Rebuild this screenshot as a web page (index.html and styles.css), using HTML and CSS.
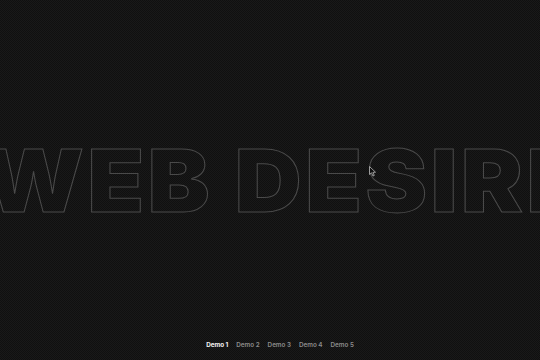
FILE: index.html
```html
<!DOCTYPE html>
<html lang="en">
<head>
<meta charset="utf-8">
<title>Web Desire</title>
<link rel="stylesheet" href="styles.css">
</head>
<body>
<main class="stage">
  <h1 class="title">WEB DESIRE</h1>
  <nav class="demos">
    <a class="demo current" href="#">Demo 1</a>
    <a class="demo" href="#">Demo 2</a>
    <a class="demo" href="#">Demo 3</a>
    <a class="demo" href="#">Demo 4</a>
    <a class="demo" href="#">Demo 5</a>
  </nav>
  <svg class="cursor" width="8" height="11" viewBox="0 0 8 11"><path d="M0.5 0.5 L0.5 8.5 L2.5 6.8 L4 10 L5.3 9.4 L3.9 6.4 L6.5 6.2 Z" fill="#111" stroke="#bbb" stroke-width="0.8"/></svg>
</main>
</body>
</html>
```
FILE: styles.css
```css
html, body {
  margin: 0;
  padding: 0;
  height: 100%;
}
body {
  background-color: #101010;
  background-image:
    linear-gradient(45deg, rgba(255,255,255,0.04) 25%, transparent 25%, transparent 75%, rgba(255,255,255,0.04) 75%),
    linear-gradient(45deg, rgba(255,255,255,0.04) 25%, transparent 25%, transparent 75%, rgba(255,255,255,0.04) 75%);
  background-size: 2px 2px;
  background-position: 0 0, 1px 1px;
  overflow: hidden;
  font-family: "Inter", "Liberation Sans", sans-serif;
}
.stage {
  position: relative;
  height: 360px;
  width: 540px;
  overflow: hidden;
  display: flex;
  flex-direction: column;
  align-items: center;
  justify-content: center;
}
.title {
  margin: 0 0 0 30px;
  font-size: 87px;
  font-weight: 900;
  line-height: 1;
  white-space: nowrap;
  color: transparent;
  -webkit-text-stroke: 1px #4a4a4a;
  letter-spacing: 3px;
  transform: scaleX(1.07);
}
.demos {
  position: absolute;
  bottom: 11px;
  left: 20px;
  right: 0;
  display: flex;
  justify-content: center;
  gap: 8px;
}
.demo {
  font-size: 6.3px;
  font-weight: 600;
  color: #8c8c8c;
  text-decoration: none;
}
.demo.current {
  color: #f2f2f2;
  font-weight: 700;
}
.cursor {
  position: absolute;
  left: 369px;
  top: 166px;
}
```
